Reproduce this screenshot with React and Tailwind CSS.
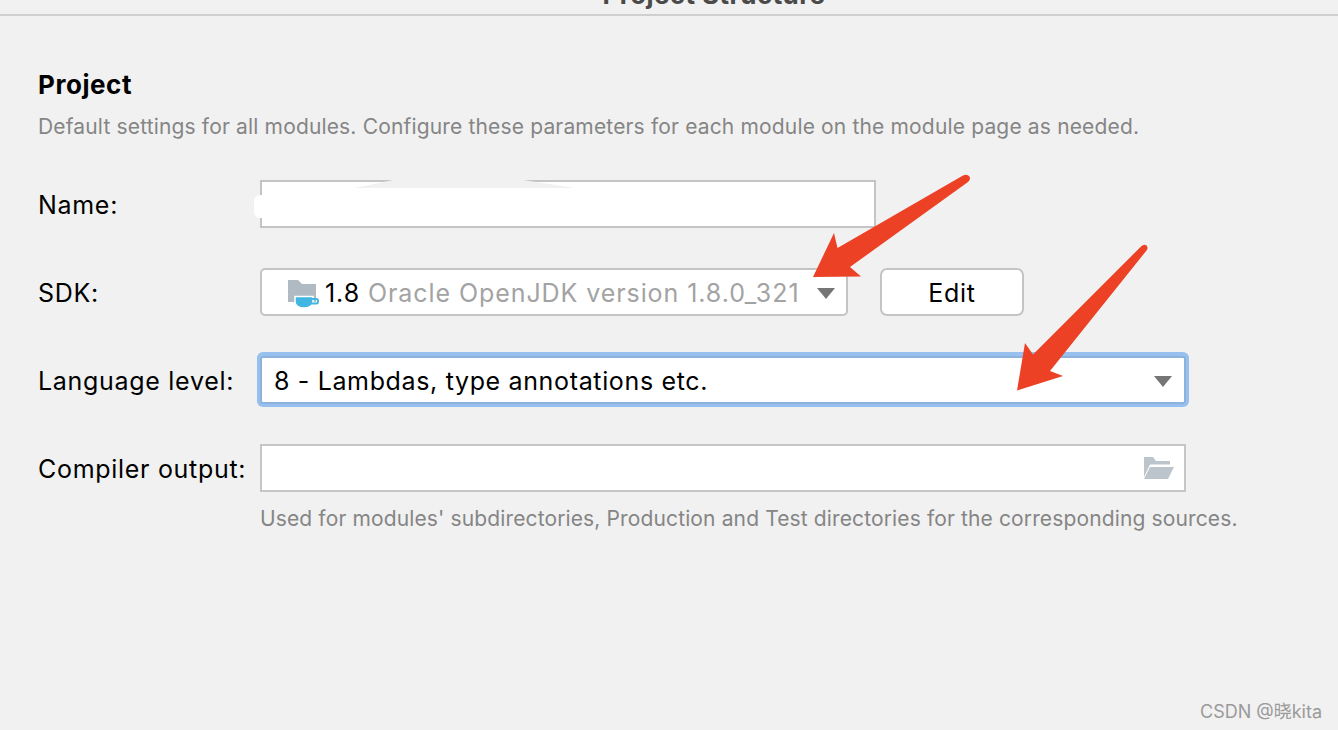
const font = { fontFamily: 'Inter, "Noto Sans CJK SC", sans-serif' };

function Caret() {
  return (
    <svg width="18" height="11" viewBox="0 0 18 11" className="mt-[2px] block shrink-0">
      <path d="M0 0H18L9 11Z" fill="#757575" />
    </svg>
  );
}

function Row({ label, children }) {
  return (
    <div className="flex h-12 items-center">
      <div className="w-[222px] shrink-0 pt-1 text-[25px] tracking-[0.7px] whitespace-nowrap text-black">{label}</div>
      {children}
    </div>
  );
}

export default function App() {
  return (
    <div className="relative h-[730px] w-[1338px] overflow-hidden bg-[#f1f1f1]" style={font}>
      <div className="flex h-4 items-end justify-center border-b-2 border-[#cfcfcf] pl-[90px]">
        <div className="mb-[5px] text-[26px] leading-7 font-bold tracking-[0.4px] text-[#4a4a4a]">Project Structure</div>
      </div>

      <div className="pt-[54px] pl-[38px]">
        <h1 className="text-[26px] leading-[30px] font-bold tracking-[0.55px] text-black">Project</h1>
        <p className="mt-[12px] text-[21px] leading-[30px] tracking-[0.16px] whitespace-nowrap text-[#858585]">
          Default settings for all modules. Configure these parameters for each module on the module page as needed.
        </p>

        <div className="mt-[38px] flex flex-col gap-10">
          <Row label="Name:">
            <div className="relative h-12 w-[616px] border-2 border-[#c4c4c4] bg-white">
              <div className="absolute top-[13px] left-[-8px] h-[23px] w-[14px] rounded-l-md bg-white" />
            </div>
          </Row>

          <Row label="SDK:">
            <div className="flex h-12 w-[588px] items-center rounded-[5px] border-2 border-[#c4c4c4] bg-white pr-[11px] pl-[26px]">
              <svg width="32" height="28" viewBox="0 0 32 28" className="mt-1 shrink-0">
                <path d="M0 0H10L14 4H28V22H0Z" fill="#afbac3" />
                <path d="M7 16.500H25V22C25 25.500 21 28 16 28C11 28 7 25.500 7 22Z" fill="#40b6e0" stroke="#ffffff" strokeWidth="1.500" />
                <path d="M24 19H28.500C30.500 19 30.500 23.500 28.500 23.500H22" fill="none" stroke="#40b6e0" strokeWidth="2" />
              </svg>
              <span className="ml-[5px] pt-1 text-[25px] tracking-[0.92px] whitespace-nowrap text-black">
                1.8 <span className="text-[#a3a3a3]">Oracle OpenJDK version 1.8.0_321</span>
              </span>
              <span className="ml-auto"><Caret /></span>
            </div>
            <div className="ml-8 flex h-12 w-[144px] items-center justify-center rounded-[7px] border-2 border-[#c4c4c4] bg-white pt-1 text-[25px] tracking-[0.75px] text-black">
              Edit
            </div>
          </Row>

          <Row label="Language level:">
            <div className="flex h-12 w-[926px] items-center rounded-[3px] border-2 border-[#8cb3de] bg-white pr-[12px] pl-[12px] text-[25px] tracking-[0.65px] text-black shadow-[0_0_0_3px_#97c0ef,0_-1px_0_3px_#97c0ef]">
              <span className="pt-1">8 - Lambdas, type annotations etc.</span>
              <span className="ml-auto"><Caret /></span>
            </div>
          </Row>

          <Row label="Compiler output:">
            <div className="flex h-12 w-[926px] items-center justify-end border-2 border-[#c6c6c6] bg-white pr-[10px]">
              <svg width="30" height="23" viewBox="0 0 30 23">
                <path d="M0 0H9L12 4H26V7.500H6L0 20Z" fill="#bcc5cc" />
                <path d="M6 10H30L24 22H0Z" fill="#bcc5cc" />
              </svg>
            </div>
          </Row>
        </div>

        <p className="mt-[12px] ml-[222px] text-[21px] leading-[30px] tracking-[0.13px] whitespace-nowrap text-[#858585]">
          Used for modules' subdirectories, Production and Test directories for the corresponding sources.
        </p>
      </div>

      <svg className="absolute top-0 left-0" width="1338" height="730" viewBox="0 0 1338 730">
        <path d="M393 180L523 180L575 188L355 188Z" fill="#f1f1f1" />
        <path d="M963 175.500Q967 173.500 969.500 176.500Q971 179.500 968 182L850 267L861 276.500L813 277L834 233L837.500 248Z" fill="#ec4125" />
        <path d="M1141 246.500Q1144 243.500 1146.500 245.500Q1148.500 248 1146.500 250.500L1050 371L1063 376L1017 390.500L1025 343L1033 354.500Z" fill="#ec4125" />
      </svg>

      <div className="absolute top-[700px] left-[1200px] text-[18px] leading-6 whitespace-nowrap text-[#9a9a9a]">CSDN @晓kita</div>
    </div>
  );
}
